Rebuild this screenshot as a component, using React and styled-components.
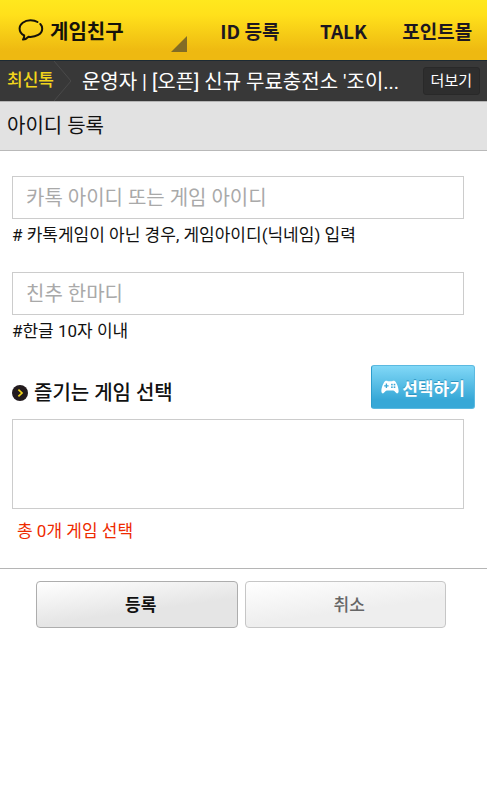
import styled, { createGlobalStyle } from "styled-components";

const menus = ["ID 등록", "TALK", "포인트몰"];

export default function App() {
  return (
    <Page>
      <GlobalStyle />
      <Header>
        <Brand href="#home">
          <TalkIcon />
          <BrandName>게임친구</BrandName>
          <Corner viewBox="0 0 16 16" aria-hidden="true">
            <path d="M16 0V16H0Z" fill="#826c25" />
          </Corner>
        </Brand>
        <Nav>
          {menus.map((menu) => (
            <NavLink key={menu} href="#menu">
              {menu}
            </NavLink>
          ))}
        </Nav>
      </Header>

      <Ticker>
        <TickerLabel>최신톡</TickerLabel>
        <TickerArrow viewBox="0 0 18 40" aria-hidden="true">
          <path d="M0 0L17 20L0 40" fill="none" stroke="#4a4a4a" />
        </TickerArrow>
        <TickerText>운영자 | [오픈] 신규 무료충전소 '조이...</TickerText>
        <MoreButton type="button">더보기</MoreButton>
      </Ticker>

      <TitleBar>아이디 등록</TitleBar>

      <form onSubmit={(e) => e.preventDefault()}>
        <Fields>
          <Field>
            <TextInput
              id="gameId"
              type="text"
              placeholder="카톡 아이디 또는 게임 아이디"
            />
            <Hint htmlFor="gameId">
              # 카톡게임이 아닌 경우, 게임아이디(닉네임) 입력
            </Hint>
          </Field>
          <Field>
            <TextInput id="message" type="text" placeholder="친추 한마디" />
            <Hint htmlFor="message">#한글 10자 이내</Hint>
          </Field>
        </Fields>

        <GameSection>
          <GameHeader>
            <GameTitle>
              <BulletIcon />
              즐기는 게임 선택
            </GameTitle>
            <SelectButton type="button">
              <PadIcon />
              선택하기
            </SelectButton>
          </GameHeader>
          <GameBox />
          <Total>총 0개 게임 선택</Total>
        </GameSection>

        <Actions>
          <ActionButton type="submit" $primary>
            등록
          </ActionButton>
          <ActionButton type="button">취소</ActionButton>
        </Actions>
      </form>
    </Page>
  );
}

function TalkIcon() {
  return (
    <svg width="26" height="22" viewBox="0 0 26 22" aria-hidden="true">
      <path
        d="M19.5 3C17.8 1.9 15.2 1.3 12.5 1.3C6.3 1.3 1.6 4.9 1.6 9.6C1.6 12.7 3.4 15.2 6.2 16.5C6.3 18.2 5.9 19.4 5 20.6C7.3 20.2 9.2 19.2 10.3 17.8C18.2 18.6 24.2 14.8 24.2 9.7C24.2 7.9 23.6 6.3 22.3 5"
        fill="none"
        stroke="#15120a"
        strokeWidth="2"
        strokeLinecap="round"
        strokeLinejoin="round"
      />
    </svg>
  );
}

function BulletIcon() {
  return (
    <svg width="16" height="16" viewBox="0 0 16 16" aria-hidden="true">
      <circle cx="8" cy="8" r="8" fill="#231b1e" />
      <path
        d="M6.4 4.6L10 8L6.4 11.4"
        fill="none"
        stroke="#f0d31c"
        strokeWidth="1.7"
      />
    </svg>
  );
}

function PadIcon() {
  return (
    <svg width="18" height="14" viewBox="0 0 18 14" aria-hidden="true">
      <path
        d="M4 1.2C5 .6 6 .7 6.8 1.2H11.2C12 .7 13 .6 14 1.2C16 3.2 17.6 8 17.6 11.2C17.6 12.6 16.9 13.4 16 13.4C14.6 13.4 14 10.6 12.2 10.6H5.8C4 10.6 3.4 13.4 2 13.4C1.1 13.4 .4 12.6 .4 11.2C.4 8 2 3.2 4 1.2Z"
        fill="#fff"
      />
      <path d="M5.4 3.6V8M3.2 5.8H7.6" stroke="#3ba9d8" strokeWidth="1.3" />
      <g fill="#3ba9d8">
        <rect x="10.1" y="3.8" width="1.6" height="1.6" />
        <rect x="12.7" y="3.8" width="1.6" height="1.6" />
        <rect x="10.1" y="6.4" width="1.6" height="1.6" />
        <rect x="12.7" y="6.4" width="1.6" height="1.6" />
      </g>
    </svg>
  );
}

const GlobalStyle = createGlobalStyle`
  * {
    box-sizing: border-box;
  }
  body {
    margin: 0;
    background: #fff;
  }
  body, button, input {
    font-family: Roboto, "Noto Sans CJK KR", sans-serif;
  }
`;

const Page = styled.div`
  color: #111;
`;

const Header = styled.header`
  display: flex;
  height: 61px;
  border-bottom: 1px solid #1d2a33;
  background: linear-gradient(#ffe81e, #ffe01b 25%, #eeb911 85%, #eeb911);
`;

const Brand = styled.a`
  display: flex;
  align-items: center;
  flex: 0 0 188px;
  padding-left: 18px;
  color: #15120a;
  text-decoration: none;
`;

const BrandName = styled.span`
  flex: 1;
  margin-left: 6px;
  font-size: 20px;
  font-weight: 700;
`;

const Corner = styled.svg`
  align-self: flex-end;
  width: 16px;
  height: 16px;
  margin: 0 1px 8px 0;
`;

const Nav = styled.nav`
  display: flex;
  flex: 1;
  align-items: center;
  padding: 0 3px 0 15px;
`;

const NavLink = styled.a`
  flex: 1;
  color: #1d1720;
  font-family: "Noto Sans CJK KR", sans-serif;
  font-size: 19px;
  font-weight: 700;
  text-align: center;
  white-space: nowrap;
  text-decoration: none;
`;

const Ticker = styled.section`
  display: flex;
  align-items: center;
  height: 40px;
  padding: 0 7px;
  background: #383838;
`;

const TickerLabel = styled.strong`
  color: #f2d51c;
  font-size: 17px;
  font-weight: 500;
  line-height: 24px;
  padding-bottom: 2px;
  white-space: nowrap;
`;

const TickerArrow = styled.svg`
  flex: none;
  width: 18px;
  height: 40px;
`;

const TickerText = styled.p`
  flex: 1;
  margin: 0 16px 0 10px;
  padding-bottom: 2px;
  overflow: hidden;
  color: #fff;
  font-size: 20px;
  white-space: nowrap;
  text-overflow: ellipsis;
`;

const MoreButton = styled.button`
  flex: none;
  height: 28px;
  padding: 0 7px;
  border: 1px solid #292929;
  border-radius: 3px;
  background: #2e2e2e;
  color: #fff;
  font-size: 15px;
  line-height: 24px;
`;

const TitleBar = styled.h1`
  margin: 0;
  padding: 0 7px;
  border-top: 1px solid #b5b5b5;
  border-bottom: 1px solid #b9b9b9;
  background: #e2e2e2;
  font-size: 20px;
  font-weight: 400;
  line-height: 48px;
`;

const Fields = styled.div`
  display: flex;
  flex-direction: column;
  gap: 24px;
  padding: 25px 23px 0 12px;
`;

const Field = styled.div`
  display: flex;
  flex-direction: column;
  gap: 4px;
`;

const TextInput = styled.input`
  width: 100%;
  height: 43px;
  padding: 0 13px;
  border: 1px solid #ccc;
  border-radius: 0;
  background: #fff;
  color: #111;
  font-size: 20px;
  &::placeholder {
    color: #a9a9a9;
  }
`;

const Hint = styled.label`
  font-size: 17px;
  line-height: 25px;
`;

const GameSection = styled.section`
  padding: 21px 12px 24px;
`;

const GameHeader = styled.div`
  display: flex;
  align-items: center;
  justify-content: space-between;
`;

const GameTitle = styled.h2`
  display: flex;
  align-items: center;
  gap: 6px;
  margin: 0;
  padding-top: 12px;
  font-size: 20px;
  font-weight: 500;
  line-height: 30px;
`;

const SelectButton = styled.button`
  display: flex;
  align-items: center;
  justify-content: center;
  gap: 3px;
  min-width: 104px;
  height: 44px;
  padding: 0 8px;
  border: 1px solid #5bb9e0;
  border-left-color: #2d9dcc;
  border-radius: 3px;
  background: linear-gradient(#81d8f7, #37a8d7 80%);
  color: #fff;
  font-size: 17px;
  font-weight: 700;
  text-shadow: 0 -1px 0 #2d93c0;
`;

const GameBox = styled.div`
  height: 90px;
  margin: 10px 11px 0 0;
  border: 1px solid #ccc;
`;

const Total = styled.p`
  margin: 10px 0 0 5px;
  color: #ee2a00;
  font-size: 17px;
  line-height: 25px;
`;

const Actions = styled.div`
  display: flex;
  gap: 7px;
  padding: 12px 41px 12px 36px;
  border-top: 1px solid #b5b5b5;
`;

const ActionButton = styled.button`
  flex: 1;
  height: 47px;
  padding: 0 0 2px 8px;
  border: 1px solid ${({ $primary }) => ($primary ? "#adadad" : "#c6c6c6")};
  border-radius: 4px;
  background: ${({ $primary }) =>
    $primary
      ? "linear-gradient(172deg, #fff, #e5e5e5 60%)"
      : "linear-gradient(172deg, #fff, #eee 60%)"};
  color: ${({ $primary }) => ($primary ? "#111" : "#666")};
  font-size: 17px;
  font-weight: ${({ $primary }) => ($primary ? 700 : 500)};
`;
